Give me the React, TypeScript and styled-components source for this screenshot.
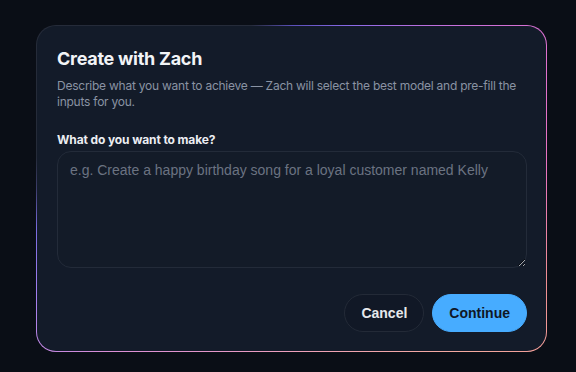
import React from 'react';
import styled, { createGlobalStyle } from 'styled-components';

const GlobalStyle = createGlobalStyle`
	html, body {
		margin: 0;
		padding: 0;
		background: #0a0e16;
		color-scheme: dark;
	}
	body {
		font-family: Inter, "Noto Sans", sans-serif;
		-webkit-font-smoothing: antialiased;
	}
`;

const Page = styled.div`
	width: 576px;
	height: 372px;
	box-sizing: border-box;
	padding: 25px 0 0 36px;
	overflow: hidden;
`;

// the glowing ring is a conic gradient showing through 1px of padding
const Frame = styled.div`
	width: 511px;
	padding: 1px;
	box-sizing: border-box;
	border-radius: 20px;
	background: conic-gradient(
		from 0deg at 50% 50%,
		#5a4fb8 0deg,
		#8a6ae8 20deg,
		#c870dc 45deg,
		#e071cf 62deg,
		#ea73c0 85deg,
		#f08e92 110deg,
		#f4a99e 132deg,
		#efa0bc 180deg,
		#dc8fd6 228deg,
		#a17ef0 248deg,
		#7a6ce0 261deg,
		#3c3d6a 270deg,
		#252b39 277deg,
		#252b39 346deg,
		#5a4fb8 360deg
	);
`;

const Card = styled.div`
	border-radius: 19px;
	background: #131b29;
	padding: 21px 19px 19px 20px;
	display: flex;
	flex-direction: column;
`;

const Title = styled.h2`
	margin: 0;
	font-size: 18px;
	line-height: 24px;
	font-weight: 700;
	letter-spacing: -0.015em;
	color: #f2f4f7;
`;

const Description = styled.p`
	margin: 7px 0 0;
	font-size: 12px;
	line-height: 16px;
	letter-spacing: -0.02em;
	color: #8a93a3;
`;

const Label = styled.label`
	margin: 22px 0 3px;
	font-size: 12px;
	line-height: 16px;
	font-weight: 700;
	letter-spacing: -0.01em;
	color: #eceef2;
`;

const Prompt = styled.textarea`
	display: block;
	width: 100%;
	height: 117px;
	box-sizing: border-box;
	margin: 0;
	padding: 10px 12px;
	border: 1px solid #232b39;
	border-radius: 14px;
	background: #131b28;
	color: #e5e7eb;
	font-family: "Liberation Sans", Arial, sans-serif;
	font-size: 14px;
	resize: vertical;
	outline: none;

	&::placeholder {
		color: #6b7382;
	}
`;

const Actions = styled.div`
	display: flex;
	justify-content: flex-end;
	gap: 8px;
	margin-top: 26px;
`;

const Button = styled.button<{ $primary?: boolean }>`
	height: 38px;
	padding: 0 16px;
	border-radius: 19px;
	border: 1px solid ${p => (p.$primary ? '#47acff' : '#232a37')};
	background: ${p => (p.$primary ? '#47acff' : '#111826')};
	color: ${p => (p.$primary ? '#0f1726' : '#e6e8ec')};
	font-family: "Liberation Sans", Arial, sans-serif;
	font-size: 14px;
	font-weight: 700;
	cursor: pointer;
`;

export default function App() {
	return (
		<>
			<GlobalStyle />
			<Page>
				<Frame>
					<Card>
						<Title>Create with Zach</Title>
						<Description>
							Describe what you want to achieve — Zach will select the best model and pre-fill the inputs for you.
						</Description>
						<Label htmlFor="prompt">What do you want to make?</Label>
						<Prompt id="prompt" placeholder="e.g. Create a happy birthday song for a loyal customer named Kelly" />
						<Actions>
							<Button>Cancel</Button>
							<Button $primary>Continue</Button>
						</Actions>
					</Card>
				</Frame>
			</Page>
		</>
	);
}
